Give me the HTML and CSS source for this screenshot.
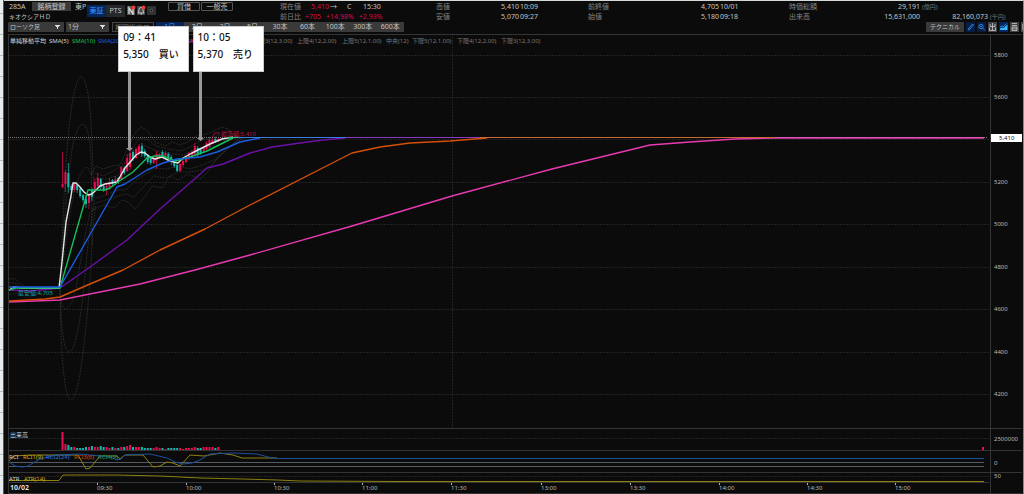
FILE: index.html
```html
<!DOCTYPE html>
<html lang="ja">
<head>
  <meta charset="UTF-8" />
  <meta name="viewport" content="width=device-width, initial-scale=1.0"/>
  <title>285A キオクシアＨＤ</title>
  <link rel="stylesheet" href="styles.css">
</head>
<body>
  <div class="screen">
    <div class="sheet-edge"></div>
    <main class="app">
      <header class="header">
        <div class="stock">
          <div class="stock-info">
            <div class="row"><span class="code">285A</span><button type="button" class="btn">銘柄登録</button><span>東P</span></div>
            <div class="row stock-name">キオクシアＨＤ</div>
          </div>
          <div class="market">
            <button type="button" class="btn on">東証</button>
            <button type="button" class="btn">PTS</button>
          </div>
          <div class="alerts">
            <button type="button" class="icon-btn" aria-label="ニュース">
              <svg viewBox="0 0 9 10"><rect y="1" width="8" height="9" fill="#555"/><path d="M2 9V3L6 9V3" stroke="#ddd" stroke-width="1.3" fill="none"/><circle cx="6.500" cy="2.500" r="2" fill="#f03a3a"/></svg>
            </button>
            <button type="button" class="icon-btn" aria-label="アラート">
              <svg viewBox="0 0 9 10"><rect y="1" width="8" height="9" fill="#444"/><path d="M1 8H7L6 6V4.500A2 2 0 0 0 2 4.500V6ZM3.500 9H5" stroke="#ccc" fill="none"/><circle cx="6.500" cy="2.500" r="2" fill="#f03a3a"/></svg>
            </button>
            <button type="button" class="icon-btn" aria-label="設定">
              <svg viewBox="0 0 9 10"><rect x="1" y="2" width="7" height="7" fill="#111" stroke="#555"/><rect x="3" y="4" width="3" height="3" fill="none" stroke="#888" stroke-width=".7"/></svg>
            </button>
          </div>
          <div class="margin">
            <button type="button" class="btn outline">貸借</button>
            <button type="button" class="btn outline">一般売</button>
          </div>
        </div>
        <div class="quotes">
          <div class="quote">
            <div class="row"><span class="label">現在値</span><span class="up price">5,410</span><span class="arrow">→</span><span class="mark">C</span><span>15:30</span></div>
            <div class="row change"><span class="label">前日比</span><span class="up">+705</span><span class="up">+14.98%</span><span class="up">+2.93%</span></div>
          </div>
          <div class="quote">
            <div class="row"><span class="label">高値</span><span class="near">5,410</span><span class="time">10:09</span></div>
            <div class="row"><span class="label">安値</span><span class="near">5,070</span><span class="time">09:27</span></div>
          </div>
          <div class="quote">
            <div class="row"><span class="label">前終値</span><span class="far">4,705</span><span class="time">10/01</span></div>
            <div class="row"><span class="label">始値</span><span class="far">5,180</span><span class="time">09:18</span></div>
          </div>
          <div class="quote">
            <div class="row"><span class="label">時価総額</span><span class="far">29,191</span><span class="unit">(億円)</span></div>
            <div class="row"><span class="label">出来高</span><span class="far">15,631,000</span><span class="amount">82,160,073</span><span class="unit">(千円)</span></div>
          </div>
        </div>
      </header>

      <nav class="toolbar">
        <select class="type" aria-label="チャート種類"><option>ローソク足</option><option>ライン</option></select>
        <select class="span" aria-label="足種"><option>1分</option><option>5分</option></select>
        <select class="period" aria-label="期間" disabled><option>期間指定</option></select>
        <div class="tabs">
          <button type="button" class="on">1日</button>
          <button type="button">2日</button>
          <button type="button">3日</button>
          <button type="button">5日</button>
          <button type="button">30本</button>
          <button type="button">60本</button>
          <button type="button">100本</button>
          <button type="button">300本</button>
          <button type="button">600本</button>
        </div>
        <div class="tools">
          <button type="button" class="btn technical">テクニカル</button>
          <button type="button" class="icon-btn" aria-label="描画">
            <svg viewBox="0 0 9 10"><rect width="9" height="10" fill="#071c42"/><path d="M2 8L3 6L6.500 2L7.500 3L4 7Z" fill="none" stroke="#2f7fd8"/></svg>
          </button>
          <button type="button" class="icon-btn" aria-label="拡大">
            <svg viewBox="0 0 9 10"><rect width="9" height="10" fill="#071c42"/><circle cx="4" cy="4.500" r="2.200" fill="none" stroke="#2f7fd8"/><path d="M5.500 6L8 8.500M3 4.500H5" stroke="#2f7fd8"/></svg>
          </button>
          <button type="button" class="icon-btn" aria-label="出来高">
            <svg viewBox="0 0 9 10"><rect width="9" height="10" fill="#444"/><path d="M4.500 1V8.500M2 2V4.500H7V2M1.500 5.500V8.500H7.500V5.500" fill="none" stroke="#ccc" stroke-width=".8"/></svg>
          </button>
          <button type="button" class="icon-btn" aria-label="チャート">
            <svg viewBox="0 0 9 10"><rect width="9" height="10" fill="#06245c"/><path d="M1 8V6.500L3 5.500L4.500 6L8.500 2.500V8Z" fill="#35b4ff"/><path d="M1 5L3 4L4.500 4.500L7.500 1.500" stroke="#35b4ff" stroke-width=".7" fill="none"/></svg>
          </button>
          <button type="button" class="icon-btn" aria-label="印刷">
            <svg viewBox="0 0 9 10"><rect width="9" height="10" fill="#444"/><path d="M2 1.500H7M2 3.500H7M2 5H7V8.500H2ZM2 6.800H7" fill="none" stroke="#ccc" stroke-width=".8"/></svg>
          </button>
          <button type="button" class="icon-btn" aria-label="その他">
            <svg viewBox="0 0 9 10"><rect width="9" height="10" fill="#444"/><path d="M2 2V8M2 5H8" stroke="#ccc"/></svg>
          </button>
        </div>
      </nav>

      <section class="chart">
        <svg class="plot" viewBox="4 33 1019 461">
          <g id="grid"></g>

          <!-- bollinger bands -->
          <g class="band">
            <path d="M60 288C62 240 65 160 70 120C75 75 83 60 89 100C92 125 93 170 94 200L94 212"/>
            <path d="M60 288C63 240 66 190 72 150C76 125 86 110 90 145C93 180 91 230 92 245"/>
            <path d="M61 288C65 240 72 190 80 175Q88 160 91 175L96 166L103 169L112 166L120 165L127 150L135 133L141 127L148 131L155 142L165 146L172 142L180 145L188 142L197 136L210 133L222 127L228 129L236 136"/>
            <path d="M95 173L103 176L115 170L124 164L132 148L140 138L148 140L156 146L168 149L180 151L190 147L200 141L214 137L228 132L238 137"/>
            <path d="M96 178L106 179L116 176L126 170L136 155L143 145L152 149L160 152L172 154L184 155L194 150L206 146L220 141L240 137"/>
            <path d="M96 198L106 195L118 190L126 190L136 180L146 174L156 168L166 169L178 166L190 169L202 165L214 160L226 150L240 138"/>
            <path d="M93 204L106 200L118 196L126 194L134 197L144 186L154 176L166 178L178 172L190 172L202 170L210 166L224 152L238 140"/>
            <path d="M92 210L104 205L114 208L122 200L128 202L135 209L144 198L152 186L162 188L170 176L178 180L188 174L200 179L208 172L216 160L230 146L244 138"/>
            <path d="M60 288C60 330 63 400 71 400C80 400 87 320 90 280C92 250 93 220 96 205"/>
            <path d="M60 290C61 320 63 352 69 352C77 352 83 300 86 265C88 240 91 225 93 208"/>
            <path d="M60 290Q61 309 66 309Q75 304 79 270Q84 240 90 212"/>
            <path d="M9 279Q15 277 20 284L28 288M9 283Q16 282 20 287M9 294Q16 295 21 290"/>
          </g>

          <g id="candles"></g>

          <g class="line">
            <path stroke="#e83ab0" d="M9 302L60 300L100 292L140 284L195 270L250 255L352 226L452 196L552 169L650 145L690 142L735 139L775 138H984"/>
            <path stroke="#d4500a" d="M9 301L45 299L60 297L90 284L123 270L160 250L205 229L250 205L352 153L380 147L410 143L450 141L487 138"/>
            <path stroke="#6c10a8" d="M9 290L30 291L60 288L90 267L127 240L160 209L182 190L207 168L223 164L250 153L272 147L300 143L323 140L345 138"/>
            <path stroke="#e6e6e6" d="M9 290L14 287L22 288L59 288L62 262L66 222L71 196L73 183L76 183L80 187L84 192L88 195L92 194L96 190L100 186L105 184L117 182L125 168L131 161L136 155L141 152L145 153L150 157L155 159L162 157L170 161L178 163L183 158L192 153L200 149L210 144L222 139L233 137"/>
            <path stroke="#14c05c" d="M9 290L16 288L60 288L88 190L105 190L110 188L118 182L133 172L147 158L155 156L163 156L175 161L190 157L207 151L223 143L233 138"/>
            <path stroke="#1a5ee0" d="M9 287H60L88 238L117 187L125 184L147 170L163 163L177 159L200 157L217 152L240 142L260 138"/>
          </g>
          <g class="flat">
            <path stroke="#777" stroke-dasharray="1 1" d="M8 137.500H988"/>
            <path stroke="#2fd090" d="M228 137.500H242"/>
            <path stroke="#3d7ddf" d="M238 137.500H346"/>
            <path stroke="#8a3bc4" d="M346 137.500H480"/>
            <path stroke="#c86a34" d="M480 137.500H775"/>
            <path stroke="#d858b4" d="M775 137.500H984"/>
          </g>

          <path class="note-arrow" d="M129.500 71V149M200.500 71V139"/>
          <path class="note-head" d="M126 148H133L129.500 151ZM197 138H204L200.500 141Z"/>

          <path stroke="#a01038" fill="none" d="M212 137L215 133H220"/>
          <text class="high" x="221" y="136">最高値:5,410</text>
          <text class="low" x="18" y="295">最安値:4,705</text>

          <g class="legend">
            <text x="10" y="43">単純移動平均</text>
            <text x="49" y="43">SMA(5)</text>
            <text x="72" y="43" fill="#14c05c">SMA(10)</text>
            <text x="98" y="43" fill="#1a5ee0">SMA(20)</text>
            <text x="181" y="43" fill="#e83ab0">SMA(1</text>
            <g fill="#777">
              <text x="253" y="43">上限3(12,3.00)</text>
              <text x="297" y="43">上限4(12,2.00)</text>
              <text x="342" y="43">上限5(12,1.00)</text>
              <text x="386" y="43">中央(12)</text>
              <text x="412" y="43">下限5(12,1.00)</text>
              <text x="457" y="43">下限4(12,2.00)</text>
              <text x="501" y="43">下限3(12,3.00)</text>
            </g>
          </g>

          <g id="volume"></g>

          <!-- RCI -->
          <path class="level" d="M9 462.500H984M9 466.500H984"/>
          <path class="thin" stroke="#8c8110" d="M9 461L14 456L30 455L78 455L86 469L90 468L100 456H117L120 459L125 455H143L153 467L160 466L167 462L173 463L180 466L190 455L204 456L220 453L233 455L242 458H277"/>
          <path class="thin" stroke="#1c4f9c" d="M9 462L15 466L22 467L28 466L40 459L57 455L80 454L110 457L117 460L121 459L125 455L150 454L167 458L175 462L183 464L192 463L200 460L210 454L233 453L257 454L268 457L277 458.500H984"/>
          <!-- ATR -->
          <path class="thin" stroke="#8c8110" d="M9 480.500H59L63 475H117L160 476L200 478L243 479L277 480L300 481L400 481.500H984"/>

          <g class="legend">
            <text x="10" y="437">出来高</text>
            <text x="9" y="459">RCI</text>
            <text x="23" y="459" fill="#c8b820">RCI1(9)</text>
            <text x="46" y="459" fill="#2a72d8">RCI2(24)</text>
            <text x="74" y="459" fill="#d4500a">RCI3(6)</text>
            <text x="98" y="459" fill="#149a5c">RCI4(9)</text>
            <text x="9" y="481">ATR</text>
            <text x="24" y="481" fill="#c8b820">ATR(14)</text>
          </g>

          <g id="axis" class="axis"></g>
          <rect x="991" y="134" width="31" height="8" fill="#fff"/>
          <text class="last-price" x="999" y="140">5,410</text>
        </svg>

        <div class="note buy">09：41<br>5,350　買い</div>
        <div class="note sell">10：05<br>5,370　売り</div>
      </section>
    </main>
  </div>
  <script src="script.js"></script>
</body>
</html>
```
FILE: styles.css
```css
* {
  box-sizing: border-box;
}

body {
  margin: 0;
  background-color: #0b0b0b;
  color: #c4c4c4;
  font-family: "Noto Sans", "Noto Sans CJK JP", sans-serif;
  font-size: 7px;
  line-height: 10px;
}

button, select {
  font: inherit;
  color: inherit;
  border: 0;
  border-radius: 0;
  padding: 0;
  margin: 0;
}

.screen {
  display: flex;
  background-color: #0b0b0b;
}

.sheet-edge {
  width: 4px;
  border-right: 1px solid #555;
  background: repeating-linear-gradient(#e8ebee 0 13px, #b4bcc4 13px 14px, #e8ebee 14px 21px);
}

.app {
  flex: 1;
  min-width: 0;
  border-top: 1px solid #d5dad8;
  border-right: 1px solid #888;
  overflow: hidden;
}

/* header */
.header {
  display: flex;
  height: 21px;
  padding-top: 1px;
  white-space: nowrap;
}

.row {
  display: flex;
  height: 10px;
}

.stock {
  display: flex;
  width: 276px;
  padding-left: 5px;
}

.stock-info {
  width: 78px;
}

.stock-info .btn {
  width: 39px;
  height: 9px;
  line-height: 9px;
  margin-right: 4px;
}

.code {
  width: 23px;
}

.stock-name {
  font-size: 6px;
}

.btn {
  background-color: #3a3a3a;
  height: 10px;
  line-height: 10px;
  text-align: center;
}

.market {
  display: flex;
  margin-top: 3px;
  width: 40px;
}

.market .btn {
  width: 19px;
  height: 12px;
  background-color: #26282c;
}

.market .btn.on {
  background-color: #072558;
  color: #3a9cff;
}

.alerts {
  display: flex;
  gap: 1px;
  width: 41px;
  margin-top: 3px;
}

.icon-btn {
  width: 9px;
  height: 10px;
  background: none;
}

.icon-btn svg {
  display: block;
  width: 9px;
  height: 10px;
}

.btn.outline {
  width: 32px;
  height: 9px;
  line-height: 7px;
  background-color: #0b0b0b;
  border: 1px solid #555;
  border-radius: 1px;
}

.margin {
  display: flex;
  gap: 1px;
}

.quotes {
  flex: 1;
  display: grid;
  grid-template-columns: 156fr 152fr 201fr 234fr;
}

.label {
  width: 31px;
  color: #858585;
}

.up {
  color: #d80a48;
}

.arrow {
  width: 17px;
}

.mark {
  width: 16px;
}

.price {
  margin-right: 1px;
}

.change {
  gap: 5px;
}

.change .label {
  width: 20px;
}

.near {
  width: 52px;
  text-align: right;
}

.far {
  width: 100px;
  text-align: right;
}

.time {
  margin-left: 1px;
}

.amount {
  width: 68px;
  text-align: right;
}

.unit {
  margin-left: 2px;
  font-size: 6px;
  color: #777;
}

/* toolbar */
.toolbar {
  display: flex;
  gap: 2px;
  height: 11px;
  padding-left: 4px;
  white-space: nowrap;
}

.toolbar select {
  appearance: none;
  height: 10px;
  padding-left: 2px;
  background: #3a3a3a conic-gradient(from -30deg at 50% 100%, #ddd 60deg, transparent 0) no-repeat;
  background-size: 5px 4px;
  background-position: right 4px center;
}

.toolbar .type {
  width: 56px;
  font-size: 6px;
}

.toolbar .span {
  width: 43px;
}

.toolbar .period {
  width: 42px;
  margin-left: 1px;
  background-color: #111;
  border: 1px solid #444;
  color: #666;
  opacity: 1;
}

/* arrows point down */
.toolbar .type,
.toolbar .span {
  background-image: conic-gradient(from -30deg at 50% 100%, #ddd 60deg, transparent 0);
}

.toolbar .period {
  background-image: conic-gradient(from -30deg at 50% 100%, #555 60deg, transparent 0);
}

.tabs {
  display: flex;
  width: 248px;
}

.tabs button {
  flex: 1 1 0;
  height: 10px;
  line-height: 10px;
  background-color: #3a3a3a;
}

.tabs .on {
  background-color: #072558;
  color: #3a9cff;
}

.tools {
  display: flex;
  gap: 2px;
  margin-left: auto;
  margin-right: -7px;
}

.technical {
  width: 38px;
  font-size: 6px;
}

/* chart */
.chart {
  position: relative;
}

.plot {
  display: block;
  width: 100%;
  height: auto;
}

.plot text {
  font-size: 6px;
}

.band path {
  fill: none;
  stroke: #363636;
  stroke-width: 0.7;
  stroke-dasharray: 2 1;
}

.line path {
  fill: none;
  stroke-width: 1.4;
  stroke-linejoin: round;
}

.flat path {
  fill: none;
  stroke-width: 1.2;
}

.thin {
  fill: none;
  stroke-width: 1;
}

.level {
  stroke: #555a60;
  stroke-width: 1;
}

.note-arrow {
  stroke: #9a9a9a;
  stroke-width: 3;
}

.note-head {
  fill: #9a9a9a;
}

.legend {
  fill: #d4d4d4;
}

.high {
  fill: #c00c42;
}

.low {
  fill: #18a8a8;
}

.axis {
  fill: #b8b8b8;
}

.axis .date {
  fill: #ddd;
  font-size: 7px;
  font-weight: bold;
}

.last-price {
  fill: #111;
}

.grid-line {
  stroke: #222;
  stroke-dasharray: 2 1;
}

.frame {
  stroke: #343434;
}

.note {
  position: absolute;
  top: -7px;
  width: 71px;
  height: 46px;
  padding: 2px 4px;
  background-color: #fff;
  border: 1px solid #ccc;
  color: #111;
  font-size: 10px;
  font-weight: 500;
  line-height: 17px;
  white-space: nowrap;
}

.buy {
  left: 11.2%;
}

.sell {
  left: 18.5%;
}
```
FILE: script.js
```js
const svgNS = "http://www.w3.org/2000/svg";
const UP = "#e80c50";
const DOWN = "#12b8b0";

// [high, low, body top, body bottom, direction]
const candles = [
  [152, 188, 184, 187, 1], [170, 192, 172, 184, 1], [163, 193, 173, 187, 0], [184, 191, 186, 190, 0],
  [183, 192, 184, 190, 1], [184, 193, 185, 190, 0], [187, 198, 189, 196, 0], [194, 202, 195, 200, 0],
  [195, 208, 199, 204, 0], [193, 209, 195, 203, 1], [188, 201, 190, 197, 0], [178, 192, 182, 190, 1],
  [173, 187, 178, 186, 1], [178, 190, 179, 187, 0], [184, 192, 186, 190, 0], [184, 195, 186, 190, 1],
  [178, 190, 182, 187, 1], [179, 186, 180, 184, 0], [176, 185, 179, 183, 1], [177, 184, 178, 182, 0],
  [166, 180, 167, 179, 1], [166, 175, 168, 173, 0], [154, 172, 158, 171, 1], [149, 170, 153, 167, 1],
  [150, 161, 152, 159, 0], [147, 159, 149, 158, 1], [144, 156, 146, 154, 1], [143, 157, 146, 154, 0],
  [149, 158, 151, 156, 0], [154, 164, 155, 162, 0], [156, 165, 158, 163, 0], [156, 164, 158, 163, 1],
  [151, 169, 154, 160, 1], [153, 158, 154, 157, 1], [150, 158, 152, 156, 0], [151, 157, 153, 156, 1],
  [152, 159, 154, 158, 0], [155, 165, 157, 162, 0], [159, 168, 161, 166, 0], [163, 172, 165, 171, 0],
  [163, 172, 164, 171, 1], [160, 167, 161, 165, 1], [156, 163, 158, 162, 1], [152, 160, 153, 158, 1],
  [150, 158, 152, 157, 1], [143, 156, 146, 154, 1], [146, 158, 148, 155, 0], [149, 155, 150, 153, 0],
  [147, 152, 148, 151, 1], [141, 150, 143, 149, 1], [137, 148, 140, 147, 1], [138, 144, 140, 143, 1],
  [137, 143, 139, 141, 0], [137, 142, 139, 141, 1]
];

const volumes = [18, 6, 5, 3, 3, 2, 2, 2, 3, 3, 4, 3, 3, 4, 3, 3, 2, 3, 2, 2, 3, 3, 4, 5, 3, 3, 3, 3,
  2, 2, 2, 2, 3, 2, 2, 1, 2, 2, 2, 2, 2, 1, 2, 2, 2, 3, 2, 2, 3, 3, 3, 3, 2, 3];

// 5400 has no label, the last price tag sits there
const prices = [["5800", 55], ["5600", 97], ["", 139], ["5200", 182], ["5000", 224], ["4800", 267], ["4600", 309], ["4400", 352], ["4200", 394]];
const times = [["09:30", 97], ["10:00", 186], ["10:30", 274], ["11:00", 362], ["11:30", 451], ["13:00", 541],
  ["13:30", 630], ["14:00", 719], ["14:30", 807], ["15:00", 895]];

function add(parent, tag, attrs, text) {
  const el = document.createElementNS(svgNS, tag);
  for (const key in attrs) el.setAttribute(key, attrs[key]);
  if (text) el.textContent = text;
  document.getElementById(parent).appendChild(el);
}

prices.forEach(([price, y]) => {
  add("grid", "path", { class: "grid-line", d: `M9 ${y + 0.5}H989` });
  if (price) add("axis", "text", { x: 994, y: y + 2 }, price);
});

[438, 476].forEach((y) => add("grid", "path", { class: "grid-line", d: `M9 ${y + 0.5}H989` }));
add("grid", "path", { class: "grid-line", d: "M452.5 34V428" });
[34, 428, 450, 472, 493].forEach((y) => add("grid", "path", { class: "frame", d: `M8 ${y + 0.5}H1022` }));
add("grid", "path", { class: "frame", d: "M8 482.5H989M8.5 34V494M990.5 34V494" });

add("axis", "text", { x: 994, y: 441 }, "2500000");
add("axis", "text", { x: 994, y: 465 }, "0");
add("axis", "text", { x: 994, y: 478 }, "50");
add("axis", "text", { x: 10, y: 490, class: "date" }, "10/02");
times.forEach(([label, x]) => {
  add("axis", "text", { x: x, y: 490 }, label);
  add("axis", "path", { d: `M${x} 483h1v2h-1Z` });
});

candles.forEach(([high, low, top, bottom, up], i) => {
  const x = 62.5 + i * 2.94;
  const color = up ? UP : DOWN;
  add("candles", "path", { d: `M${x} ${high}V${low}`, stroke: color, "stroke-width": 0.7 });
  add("candles", "rect", { x: x - 1, y: top, width: 2, height: bottom - top, fill: color });
  add("volume", "rect", { x: x - 1, y: 450 - volumes[i], width: 2, height: volumes[i], fill: color });
});
add("volume", "rect", { x: 982, y: 447, width: 2, height: 3, fill: UP });
```
